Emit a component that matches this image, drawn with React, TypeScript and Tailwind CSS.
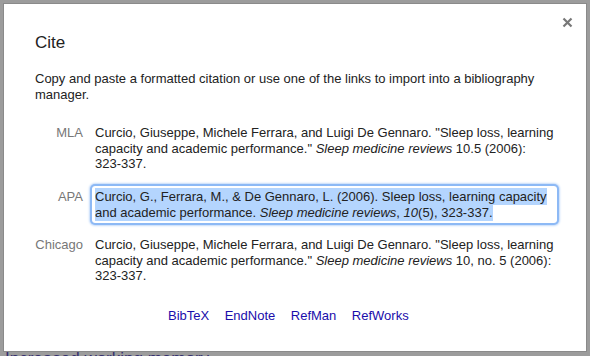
import type React from "react"

const rows: { label: string; text: React.ReactNode; active?: boolean }[] = [
  {
    label: "MLA",
    text: (
      <>
        Curcio, Giuseppe, Michele Ferrara, and Luigi De Gennaro. "Sleep loss, learning capacity and academic
        performance." <i>Sleep medicine reviews</i> 10.5 (2006): 323-337.
      </>
    ),
  },
  {
    label: "APA",
    active: true,
    text: (
      <span className="bg-[#b4d5fe] py-[1px]">
        Curcio, G., Ferrara, M., &amp; De Gennaro, L. (2006). Sleep loss, learning capacity and academic performance.{" "}
        <i>Sleep medicine reviews</i>, <i>10</i>(5), 323-337.
      </span>
    ),
  },
  {
    label: "Chicago",
    text: (
      <>
        Curcio, Giuseppe, Michele Ferrara, and Luigi De Gennaro. "Sleep loss, learning capacity and academic
        performance." <i>Sleep medicine reviews</i> 10, no. 5 (2006): 323-337.
      </>
    ),
  },
]

const links = ["BibTeX", "EndNote", "RefMan", "RefWorks"]

export default function App() {
  return (
    <div className="h-[356px] overflow-hidden bg-[#9c9c9c] p-[3px] font-['Liberation_Sans',Arial,sans-serif] text-[13px] leading-[1.2] text-[#222]">
      <div className="relative z-10 h-[349px] w-[584px] border border-[#8a8a8a] bg-white pl-[31px] pt-[29px]">
        <button className="absolute right-[13px] top-[13px] p-0 text-[#777]" aria-label="Close">
          <svg width="11" height="11" viewBox="0 0 11 11">
            <path d="M1.5 1.5 L9.5 9.5 M9.5 1.5 L1.5 9.5" stroke="currentColor" strokeWidth="2.2" />
          </svg>
        </button>

        <h2 className="text-[17px] leading-[20px] font-normal">Cite</h2>
        <p className="mt-[18px] w-[520px]">
          Copy and paste a formatted citation or use one of the links to import into a bibliography manager.
        </p>

        <div className="mt-[20px] flex flex-col gap-[11px]">
          {rows.map((r) => (
            <div key={r.label} className="flex">
              <div className="mr-[9px] w-[48px] pt-[3px] text-right text-[#777]">{r.label}</div>
              <div
                className={
                  r.active
                    ? "w-[465px] rounded-[3px] p-[3px] shadow-[0_0_0_2px_#8db9f5,0_0_2px_3px_#c4dbfa]"
                    : "w-[465px] p-[3px]"
                }
              >
                {r.text}
              </div>
            </div>
          ))}
        </div>

        <div className="mt-[21px] flex gap-[15.5px] pl-[133px]">
          {links.map((l) => (
            <a key={l} href="#" className="text-[#1a0dab]">
              {l}
            </a>
          ))}
        </div>
      </div>
      <div className="-mt-[2px] pl-[2px] text-[17px] leading-none text-[#35306f]">Increased working memory</div>
    </div>
  )
}
